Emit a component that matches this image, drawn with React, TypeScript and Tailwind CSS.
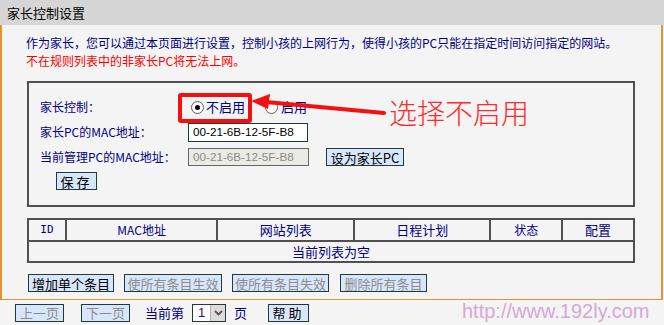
import React from 'react';

const btn =
  'h-[18px] flex items-center justify-center bg-[#d8e6fb] border border-[#1e3a3a] text-[13px] leading-none';

export default function App() {
  return (
    <div className="relative w-[664px] h-[325px] bg-[#f4f4f4] overflow-hidden font-['Noto_Sans_CJK_SC',sans-serif] text-[12px]">
      {/* title bar */}
      <div className="h-[25px] bg-[#d6d6d6] pl-[7px] flex items-center text-[13px] text-black">家长控制设置</div>

      {/* main panel */}
      <div className="w-[663px] h-[275px] border-l-2 border-r-2 border-b border-[#e8922c] pl-[25px] pt-[9px]">
        <p className="leading-[18px] text-[#000080] -ml-[1px]">
          作为家长，您可以通过本页面进行设置，控制小孩的上网行为，使得小孩的PC只能在指定时间访问指定的网站。
        </p>
        <p className="leading-[18px] text-[#ff0000] -ml-[1px]">不在规则列表中的非家长PC将无法上网。</p>

        <div className="mt-[11px] w-[608px] h-[126px] border-2 border-[#505050] pl-[11px] pt-[12px] text-[#000080]">
          <div className="h-[24px] flex items-center">
            <span className="w-[151px]">家长控制：</span>
            <span className="w-[13px] h-[13px] rounded-full border border-[#606060] bg-white flex items-center justify-center">
              <span className="w-[5px] h-[5px] rounded-full bg-black" />
            </span>
            <span className="ml-[2px] text-[13px]">不启用</span>
            <span className="ml-[20px] w-[13px] h-[13px] rounded-full border border-[#606060] bg-white" />
            <span className="ml-[3px] text-[13px]">启用</span>
          </div>
          <div className="h-[26px] flex items-center">
            <span className="w-[148px]">家长PC的MAC地址：</span>
            <span className="w-[120px] h-[19px] border border-[#1e3a3a] bg-white pl-[4px] flex items-center font-['Liberation_Sans',sans-serif] text-[11.7px] text-black">
              00-21-6B-12-5F-B8
            </span>
          </div>
          <div className="h-[24px] flex items-center">
            <span className="w-[148px]">当前管理PC的MAC地址：</span>
            <span className="w-[121px] h-[18px] border border-[#5a6a6a] bg-[#ebebe4] pl-[4px] flex items-center font-['Liberation_Sans',sans-serif] text-[11.7px] text-[#8a8a8a]">
              00-21-6B-12-5F-B8
            </span>
            <span className={`${btn} ml-[17px] w-[78px] text-black`}>设为家长PC</span>
          </div>
          <div className={`${btn} mt-[3px] ml-[16px] w-[41px] text-black tracking-[3px]`}>保存</div>
        </div>

        <table className="mt-[11px] w-[608px] border-collapse border-2 border-[#505050] text-[#000080] text-center">
          <tbody>
            <tr className="h-[20px]">
              <td className="w-[38px] border-2 border-[#505050] font-['DejaVu_Sans_Mono',monospace] text-[11px]">ID</td>
              <td className="w-[152px] border-2 border-[#505050]">MAC地址</td>
              <td className="w-[137px] border-2 border-[#505050] text-[13px]">网站列表</td>
              <td className="w-[137px] border-2 border-[#505050] text-[13px]">日程计划</td>
              <td className="w-[72px] border-2 border-[#505050]">状态</td>
              <td className="w-[72px] border-2 border-[#505050] text-[13px]">配置</td>
            </tr>
            <tr className="h-[20px]">
              <td colSpan={6} className="border-2 border-[#505050] text-[13px]">当前列表为空</td>
            </tr>
          </tbody>
        </table>

        <div className="mt-[11px] ml-[1px] flex gap-[10px]">
          <span className={`${btn} w-[86px] text-black`}>增加单个条目</span>
          <span className={`${btn} w-[98px] text-[#8c8c8c]`}>使所有条目生效</span>
          <span className={`${btn} w-[97px] text-[#8c8c8c]`}>使所有条目失效</span>
          <span className={`${btn} w-[87px] text-[#8c8c8c] ml-[1px]`}>删除所有条目</span>
        </div>
      </div>

      {/* bottom bar */}
      <div className="h-[25px] flex items-center pl-[15px] text-[13px]">
        <span className={`${btn} w-[49px] text-[#8c8c8c]`}>上一页</span>
        <span className={`${btn} ml-[17px] w-[49px] text-[#8c8c8c]`}>下一页</span>
        <span className="ml-[15px] text-[#000080]">当前第</span>
        <span className="ml-[8px] w-[34px] h-[18px] border border-[#1e3a3a] bg-white flex">
          <span className="flex-1 pl-[5px] flex items-center font-['Liberation_Sans',sans-serif] text-[#400080]">1</span>
          <span className="w-[15px] bg-[#dcdcdc] border-l border-[#b0b0b0] flex items-center justify-center">
            <svg width="9" height="6" viewBox="0 0 9 6">
              <path d="M1 1 L4.5 4.5 L8 1" fill="none" stroke="#555" strokeWidth="1.8" />
            </svg>
          </span>
        </span>
        <span className="ml-[8px] text-[#000080]">页</span>
        <span className={`${btn} ml-[21px] w-[41px] text-black tracking-[3px]`}>帮助</span>
      </div>

      {/* watermark */}
      <div className="absolute left-[462px] top-[299px] font-['Liberation_Sans',sans-serif] text-[20px] leading-[24px] text-[#d6a8d6]">
        http://www.192ly.com
      </div>

      {/* annotation */}
      <div className="absolute left-[178px] top-[93px] w-[74px] h-[30px] border-[4px] border-[#f21010] rounded-[3px]" />
      <svg className="absolute left-0 top-0 pointer-events-none" width="664" height="325">
        <line x1="384" y1="113" x2="266" y2="102" stroke="#f21010" strokeWidth="4" strokeLinecap="round" />
        <polygon points="251,101 270,94 268,109" fill="#f21010" />
      </svg>
      <div className="absolute left-[389px] top-[96px] text-[28px] leading-[32px] font-extralight text-[#ff2a2a]">选择不启用</div>
    </div>
  );
}
